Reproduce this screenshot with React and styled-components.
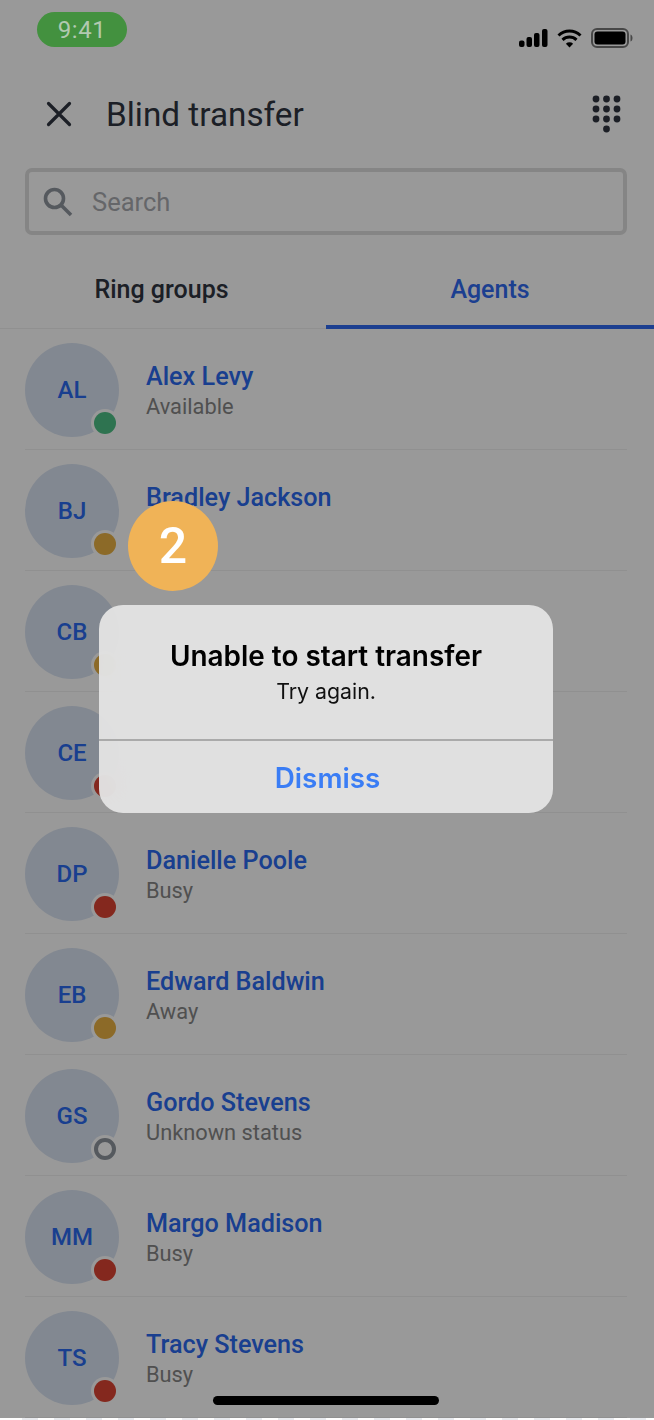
import React from 'react';
import styled, { createGlobalStyle } from 'styled-components';

const GlobalStyle = createGlobalStyle`
    html, body {
        margin: 0;
        padding: 0;
        background: #fff;
        font-family: Roboto, "Liberation Sans", sans-serif;
    }
`;

const Page = styled.div`
    width: 654px;
`;

const Screen = styled.div`
    position: relative;
    height: 1418px;
    overflow: hidden;
    background: #fff;
`;

const TileStrip = styled.div`
    height: 2px;
    background: repeating-linear-gradient(90deg, #fff 0 16px, #e8eaee 16px 32px);
    background-position: 6px 0;
`;

const StatusBar = styled.div`
    display: flex;
    justify-content: space-between;
    align-items: flex-start;
    height: 68px;
    box-sizing: border-box;
    padding: 12px 21px 0 37px;
`;

const TimePill = styled.div`
    position: relative;
    z-index: 2;
    width: 90px;
    height: 35px;
    border-radius: 18px;
    background: #43913f;
    color: #b2c9b0;
    font-size: 24px;
    line-height: 36px;
    text-align: center;
    letter-spacing: 0.6px;
`;

const StatusIcons = styled.div`
    display: flex;
    align-items: center;
    gap: 9px;
    margin-top: 16px;
`;

const Header = styled.div`
    display: flex;
    align-items: center;
    height: 92px;
    padding: 0 32px 0 45px;
`;

const HeaderTitle = styled.h1`
    flex: 1;
    margin: 0 0 0 33px;
    padding-top: 2px;
    color: #2f3540;
    font-size: 33.3px;
    font-weight: 400;
    line-height: 90px;
`;

const SearchBox = styled.div`
    display: flex;
    align-items: center;
    gap: 19px;
    height: 67px;
    margin: 8px 27px 0 25px;
    padding-left: 14px;
    box-sizing: border-box;
    border: 4px solid #dedede;
    border-radius: 7px;
`;

const SearchText = styled.span`
    color: #a9abaf;
    font-size: 25.5px;
`;

const Tabs = styled.div`
    display: flex;
    height: 94px;
    border-bottom: 1px solid #f0f0f0;
    box-sizing: border-box;
`;

const Tab = styled.div`
    width: ${props => (props.$active ? '328px' : '326px')};
    display: flex;
    align-items: center;
    justify-content: center;
    padding: 19px ${props => (props.$active ? '0' : '3px')} 0 0;
    margin-bottom: -1px;
    box-sizing: border-box;
    font-size: 25px;
    font-weight: 500;
    color: ${props => (props.$active ? '#2f69f0' : '#2f3540')};
    border-bottom: 4px solid ${props => (props.$active ? '#2f69f0' : 'transparent')};
`;

const List = styled.div`
    padding: 0 27px 0 25px;
`;

const Row = styled.div`
    display: flex;
    align-items: flex-start;
    height: 121px;
    box-sizing: border-box;
    padding-top: 14px;
    border-bottom: 1px solid #f0f0f0;
`;

const Avatar = styled.div`
    position: relative;
    flex: none;
    width: 94px;
    height: 94px;
    border-radius: 50%;
    display: flex;
    align-items: center;
    justify-content: center;
    background: #d9e3f2;
    color: #2b69ee;
    font-size: 24px;
    font-weight: 500;
`;

const dotColors = {
    available: '#4ec085',
    away: '#e9b143',
    busy: '#dc4432',
};

const StatusDot = styled.span`
    position: absolute;
    right: 3px;
    bottom: 3px;
    width: 22px;
    height: 22px;
    box-sizing: border-box;
    border-radius: 50%;
    background: ${props => dotColors[props.$status] || '#fff'};
    border: ${props => (dotColors[props.$status] ? 'none' : '4px solid #8e949d')};
    box-shadow: 0 0 0 3px #fff;
`;

const RowText = styled.div`
    display: flex;
    flex-direction: column;
    margin-left: 27px;
    padding-top: 19px;
`;

const Name = styled.div`
    color: #2b69ee;
    font-size: 25.2px;
    font-weight: 500;
    line-height: 30px;
`;

const StatusLabel = styled.div`
    color: #868686;
    font-size: 21.8px;
    line-height: 29px;
`;

const HomeBar = styled.div`
    position: absolute;
    z-index: 2;
    left: 213px;
    bottom: 13px;
    width: 226px;
    height: 9px;
    border-radius: 5px;
    background: #000;
`;

const Overlay = styled.div`
    position: absolute;
    inset: 0;
    z-index: 1;
    display: flex;
    align-items: center;
    justify-content: center;
    background: rgba(0, 0, 0, 0.4);
`;

const Dialog = styled.div`
    width: 454px;
    height: 208px;
    margin-left: -2px;
    display: flex;
    flex-direction: column;
    border-radius: 24px;
    overflow: hidden;
    background: rgba(228, 228, 228, 0.95);
    backdrop-filter: blur(30px);
    font-family: Inter, "Liberation Sans", sans-serif;
`;

const DialogBody = styled.div`
    height: 136px;
    box-sizing: border-box;
    padding-top: 33px;
    text-align: center;
    border-bottom: 2px solid #aaa;
`;

const DialogTitle = styled.div`
    color: #000;
    font-size: 27.9px;
    font-weight: 600;
    line-height: 36px;
`;

const DialogText = styled.div`
    margin-top: 4px;
    color: #111;
    font-size: 21.3px;
    line-height: 27px;
`;

const DialogAction = styled.div`
    flex: 1;
    display: flex;
    align-items: center;
    justify-content: center;
    padding: 2px 0 0 3px;
    color: #3a7df5;
    font-size: 27.8px;
    font-weight: 600;
`;

const StepBadge = styled.div`
    position: absolute;
    left: 128px;
    top: 501px;
    width: 90px;
    height: 90px;
    border-radius: 50%;
    display: flex;
    align-items: center;
    justify-content: center;
    background: #f0b357;
    color: #fff;
    font-size: 50px;
    font-weight: 500;
`;

const agents = [
    { initials: 'AL', name: 'Alex Levy', status: 'available', label: 'Available' },
    { initials: 'BJ', name: 'Bradley Jackson', status: 'away', label: 'Away' },
    { initials: 'CB', status: 'away' },
    { initials: 'CE', status: 'busy' },
    { initials: 'DP', name: 'Danielle Poole', status: 'busy', label: 'Busy' },
    { initials: 'EB', name: 'Edward Baldwin', status: 'away', label: 'Away' },
    { initials: 'GS', name: 'Gordo Stevens', status: 'unknown', label: 'Unknown status' },
    { initials: 'MM', name: 'Margo Madison', status: 'busy', label: 'Busy' },
    { initials: 'TS', name: 'Tracy Stevens', status: 'busy', label: 'Busy' },
];

const SignalIcon = () => (
    <svg width="29" height="18" viewBox="0 0 29 18" fill="#000">
        <rect x="0" y="11.5" width="5.5" height="6.5" rx="2" />
        <rect x="7.5" y="8" width="5.5" height="10" rx="2" />
        <rect x="15" y="4" width="5.5" height="14" rx="2" />
        <rect x="23" y="0" width="5.5" height="18" rx="2" />
    </svg>
);

const WifiIcon = () => (
    <svg width="25" height="19" viewBox="0 0 25 19" fill="none" stroke="#000" strokeWidth="3">
        <path d="M1.5 6.5a16 16 0 0 1 22 0" />
        <path d="M5.5 10.8a10.2 10.2 0 0 1 14 0" />
        <path d="M12.5 18.5l-3.6-3.7a5.2 5.2 0 0 1 7.2 0z" fill="#000" stroke="none" />
    </svg>
);

const BatteryIcon = () => (
    <svg width="42" height="20" viewBox="0 0 42 20">
        <rect x="1" y="1" width="36" height="18" rx="5" fill="none" stroke="#777" strokeWidth="2" />
        <rect x="3.5" y="3.5" width="31" height="13" rx="3" fill="#000" />
        <path d="M39.5 6.5c1.5.5 2 2 2 3.5s-.5 3-2 3.5z" fill="#777" />
    </svg>
);

const CloseIcon = () => (
    <svg width="28" height="28" viewBox="0 0 28 28" stroke="#2f3540" strokeWidth="3.2" strokeLinecap="round">
        <path d="M3.5 3.5l21 21M24.500 3.5l-21 21" />
    </svg>
);

const DialpadIcon = () => (
    <svg width="30" height="38" viewBox="0 0 30 38" fill="#2f3540">
        {[0, 1, 2].map(row =>
            [0, 1, 2].map(col => (
                <circle key={`${row}-${col}`} cx={4 + col * 10.5} cy={4 + row * 10} r="3.4" />
            ))
        )}
        <circle cx="14.5" cy="34" r="3.4" />
    </svg>
);

const SearchIcon = () => (
    <svg width="30" height="30" viewBox="0 0 30 30" fill="none" stroke="#8e949d" strokeWidth="3.6">
        <circle cx="11.5" cy="11.5" r="9" />
        <path d="M18 18l10 10" />
    </svg>
);

export default function App() {
    return (
        <Page>
            <GlobalStyle />
            <Screen>
                <StatusBar>
                    <TimePill>9:41</TimePill>
                    <StatusIcons>
                        <SignalIcon />
                        <WifiIcon />
                        <BatteryIcon />
                    </StatusIcons>
                </StatusBar>
                <Header>
                    <CloseIcon />
                    <HeaderTitle>Blind transfer</HeaderTitle>
                    <DialpadIcon />
                </Header>
                <SearchBox>
                    <SearchIcon />
                    <SearchText>Search</SearchText>
                </SearchBox>
                <Tabs>
                    <Tab>Ring groups</Tab>
                    <Tab $active>Agents</Tab>
                </Tabs>
                <List>
                    {agents.map(agent => (
                        <Row key={agent.initials}>
                            <Avatar>
                                {agent.initials}
                                <StatusDot $status={agent.status} />
                            </Avatar>
                            <RowText>
                                <Name>{agent.name}</Name>
                                <StatusLabel>{agent.label}</StatusLabel>
                            </RowText>
                        </Row>
                    ))}
                </List>
                <HomeBar />
                <Overlay>
                    <StepBadge>2</StepBadge>
                    <Dialog>
                        <DialogBody>
                            <DialogTitle>Unable to start transfer</DialogTitle>
                            <DialogText>Try again.</DialogText>
                        </DialogBody>
                        <DialogAction>Dismiss</DialogAction>
                    </Dialog>
                </Overlay>
            </Screen>
            <TileStrip />
        </Page>
    );
}
